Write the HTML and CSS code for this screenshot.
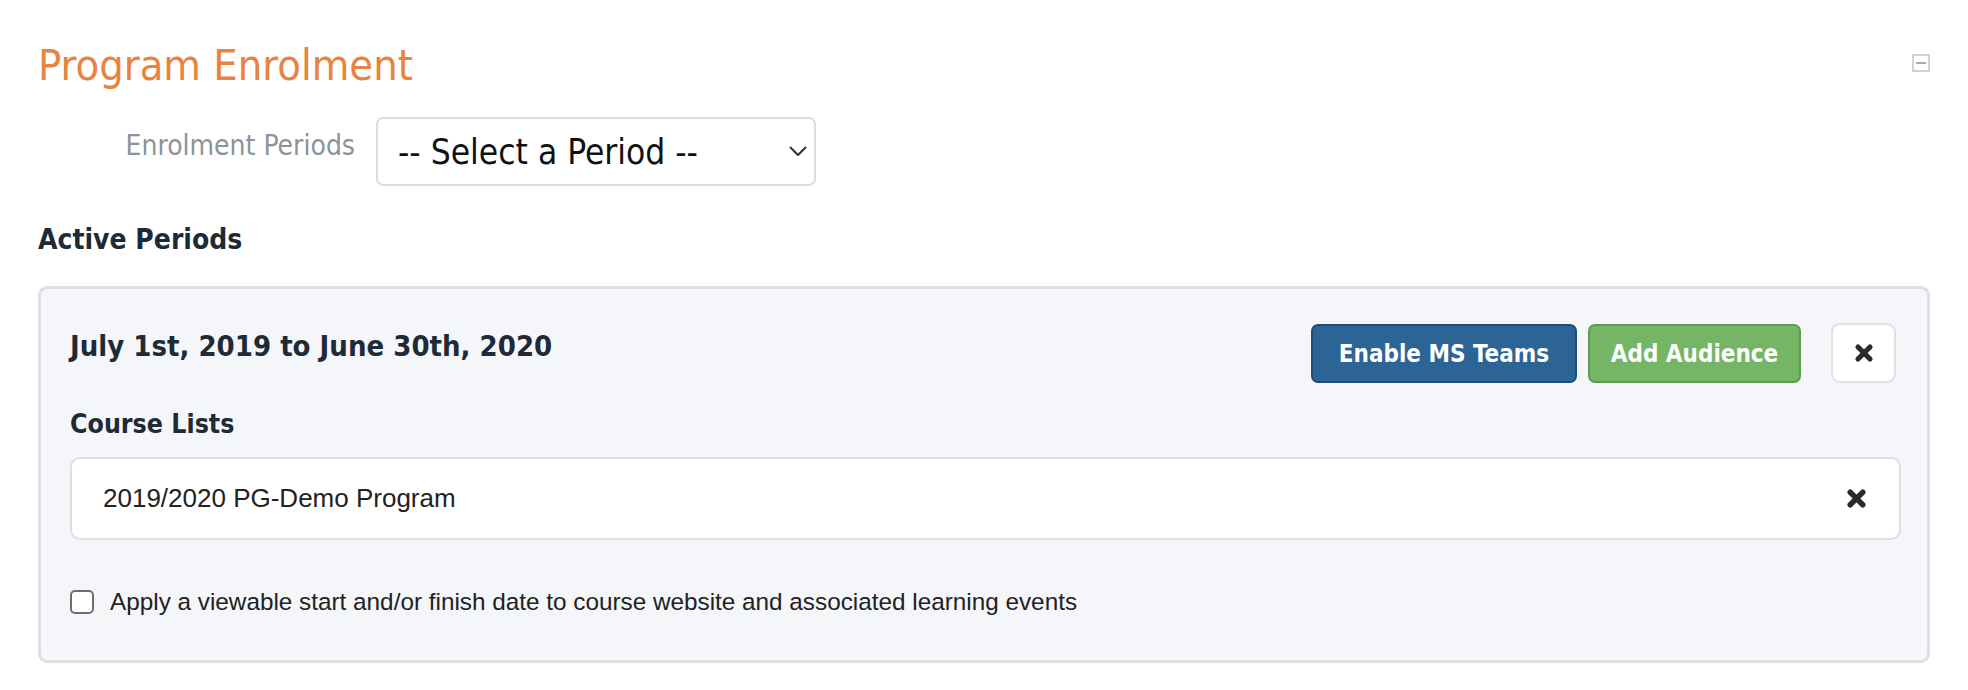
FILE: index.html
```html
<!DOCTYPE html>
<html>
<head>
<meta charset="utf-8">
<link rel="stylesheet" href="styles.css">
</head>
<body>
<div class="page">
  <div class="title-row">
    <h1 class="title">Program Enrolment</h1>
    <span class="collapse"><span class="collapse-bar"></span></span>
  </div>
  <div class="form-row">
    <label class="form-label">Enrolment Periods</label>
    <div class="select">
      <span class="select-text">-- Select a Period --</span>
      <svg class="chevron" width="18" height="11" viewBox="0 0 18 11"><path d="M1.5 1.5 L9 9 L16.5 1.5" fill="none" stroke="#333" stroke-width="2" stroke-linecap="round" stroke-linejoin="round"/></svg>
    </div>
  </div>
  <h2 class="section">Active Periods</h2>
  <div class="card">
    <div class="card-head">
      <h3 class="period">July 1st, 2019 to June 30th, 2020</h3>
      <div class="actions">
        <button class="btn btn-blue">Enable MS Teams</button>
        <button class="btn btn-green">Add Audience</button>
        <button class="btn btn-close"><svg width="20" height="20" viewBox="0 0 20 20"><path d="M4 4 L16 16 M16 4 L4 16" stroke="#2a2a2a" stroke-width="5.2" stroke-linecap="round"/></svg></button>
      </div>
    </div>
    <h4 class="sub">Course Lists</h4>
    <div class="item">
      <span class="item-text">2019/2020 PG-Demo Program</span>
      <svg class="item-x" width="21" height="21" viewBox="0 0 20 20"><path d="M4 4 L16 16 M16 4 L4 16" stroke="#2a2a2a" stroke-width="5.2" stroke-linecap="round"/></svg>
    </div>
    <label class="check">
      <span class="box"></span>
      <span class="check-text">Apply a viewable start and/or finish date to course website and associated learning events</span>
    </label>
  </div>
</div>
</body>
</html>
```

FILE: styles.css
```css
html, body {
  margin: 0;
  padding: 0;
  background: #ffffff;
}
.page {
  padding: 40px 38px 0 38px;
  font-family: "DejaVu Sans Condensed", "DejaVu Sans", Verdana, sans-serif;
  font-stretch: condensed;
  color: #1e2b36;
}
.title-row {
  display: flex;
  justify-content: space-between;
  align-items: flex-start;
}
.title {
  margin: 0;
  font-size: 43px;
  line-height: 50px;
  font-weight: normal;
  color: #e8843f;
}
.collapse {
  margin-top: 14px;
  width: 18px;
  height: 18px;
  box-sizing: border-box;
  border: 2px solid #d3d3d3;
  display: flex;
  align-items: center;
  justify-content: center;
}
.collapse-bar {
  width: 10px;
  height: 2px;
  background: #ababab;
}
.form-row {
  display: flex;
  align-items: center;
  margin-top: 27px;
}
.form-label {
  width: 317px;
  text-align: right;
  font-size: 28px;
  color: #8c939b;
  margin-right: 21px;
  margin-bottom: 12px;
}
.select {
  width: 440px;
  height: 69px;
  box-sizing: border-box;
  border: 2px solid #d9dce1;
  border-radius: 7px;
  display: flex;
  align-items: center;
  justify-content: space-between;
  padding: 0 7px 0 20px;
  background: #fff;
}
.select-text {
  font-size: 35px;
  color: #111;
}
.section {
  margin: 37px 0 0 0;
  font-size: 28px;
  line-height: 34px;
  font-weight: bold;
}
.card {
  margin-top: 29px;
  border: 3px solid #dcdfe4;
  border-radius: 9px;
  background: #f5f6fa;
  padding: 35px 26px 44px 29px;
}
.card-head {
  display: flex;
  justify-content: space-between;
  align-items: flex-start;
}
.period {
  margin: 4px 0 0 0;
  font-size: 29px;
  line-height: 36px;
  font-weight: bold;
}
.actions {
  display: flex;
  align-items: flex-start;
  margin-right: 5px;
}
.btn {
  font-family: "DejaVu Sans Condensed", "DejaVu Sans", Verdana, sans-serif;
  font-stretch: condensed;
  font-weight: bold;
  font-size: 24px;
  height: 59px;
  box-sizing: border-box;
  border-radius: 7px;
  padding: 0 18px;
  white-space: nowrap;
  cursor: pointer;
}
.btn-blue {
  background: #2c6495;
  border: 2px solid #1f4d78;
  color: #fff;
  width: 266px;
}
.btn-green {
  background: #74b566;
  border: 2px solid #5e9c51;
  color: #fff;
  width: 213px;
  margin-left: 11px;
}
.btn-close {
  background: #fff;
  border: 2px solid #dfe1e5;
  width: 65px;
  height: 60px;
  margin-left: 30px;
  margin-top: -1px;
  padding: 0;
  display: flex;
  align-items: center;
  justify-content: center;
  border-radius: 9px;
}
.sub {
  margin: 24px 0 0 0;
  font-size: 26.5px;
  line-height: 34px;
  font-weight: bold;
}
.item {
  margin-top: 16px;
  height: 83px;
  box-sizing: border-box;
  background: #fff;
  border: 2px solid #dcdfe4;
  border-radius: 10px;
  display: flex;
  align-items: center;
  justify-content: space-between;
  padding: 0 32px 0 31px;
}
.item-text {
  font-family: "Liberation Sans", Arial, sans-serif;
  font-stretch: normal;
  font-size: 26px;
  color: #222;
}
.check {
  display: flex;
  align-items: center;
  margin-top: 48px;
  height: 28px;
}
.box {
  width: 24px;
  height: 24px;
  box-sizing: border-box;
  border: 2px solid #6e6e6e;
  border-radius: 5px;
  background: #fff;
  margin-right: 16px;
}
.check-text {
  font-family: "Liberation Sans", Arial, sans-serif;
  font-stretch: normal;
  font-size: 24.3px;
  line-height: 28px;
  color: #222;
}
```
